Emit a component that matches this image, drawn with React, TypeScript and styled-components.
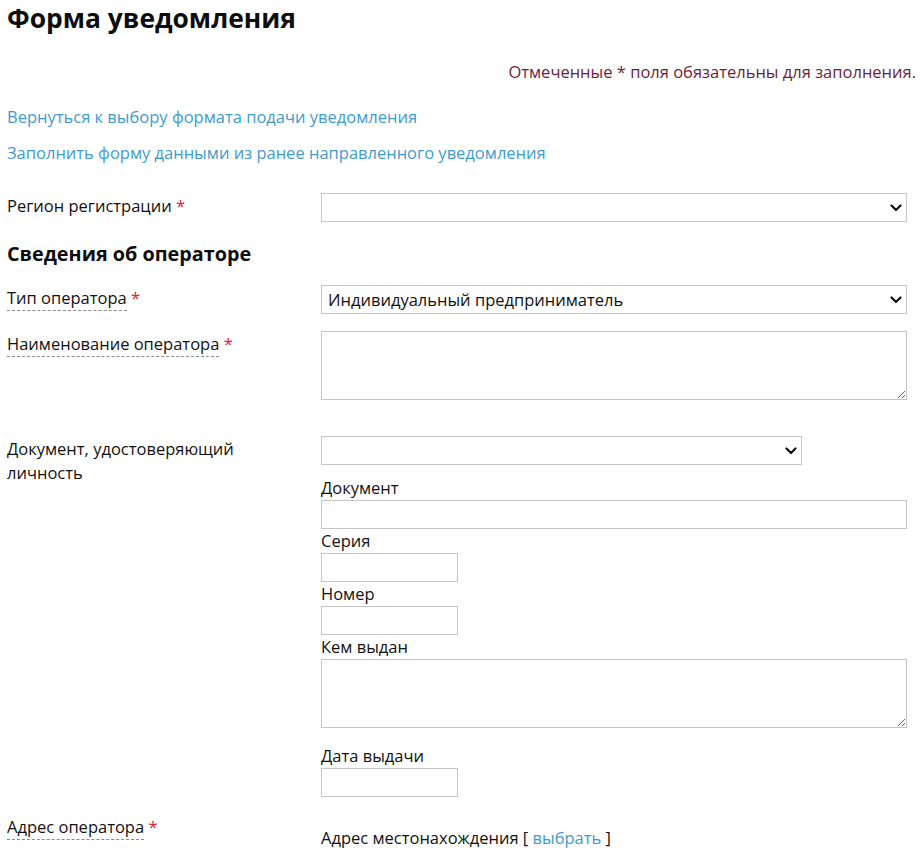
import React from 'react';
import styled, { createGlobalStyle } from 'styled-components';

const GlobalStyle = createGlobalStyle`
  body {
    margin: 0;
    background: #fff;
    color: #111;
    font-family: "Open Sans", "Liberation Sans", sans-serif;
    font-size: 16.5px;
  }
`;

const Dropdown = ({ width, value }: { width?: number; value?: string }) => (
  <SelectWrap $width={width}>
    <Select defaultValue={value ?? ''}>
      <option value={value ?? ''}>{value}</option>
    </Select>
    <Chevron viewBox="0 0 12 8" aria-hidden="true">
      <path d="M1.5 1.5 L6 6 L10.5 1.5" fill="none" stroke="#111" strokeWidth="2.2" strokeLinecap="round" strokeLinejoin="round" />
    </Chevron>
  </SelectWrap>
);

const App = () => {
  return (
    <Page>
      <GlobalStyle />
      <Title>Форма уведомления</Title>
      <Notice>Отмеченные * поля обязательны для заполнения.</Notice>
      <NavLink href="#" $top={21}>
        Вернуться к выбору формата подачи уведомления
      </NavLink>
      <NavLink href="#" $top={12}>
        Заполнить форму данными из ранее направленного уведомления
      </NavLink>

      <Row $top={28}>
        <Label>
          Регион регистрации <Req>*</Req>
        </Label>
        <Controls>
          <Dropdown />
        </Controls>
      </Row>

      <SectionTitle>Сведения об операторе</SectionTitle>

      <Row $top={17}>
        <Label>
          <Hint>Тип оператора</Hint> <Req>*</Req>
        </Label>
        <Controls>
          <Dropdown value="Индивидуальный предприниматель" />
        </Controls>
      </Row>

      <Row $top={17}>
        <Label>
          <Hint>Наименование оператора</Hint> <Req>*</Req>
        </Label>
        <Controls>
          <TextArea />
        </Controls>
      </Row>

      <Row $top={36}>
        <Label>Документ, удостоверяющий личность</Label>
        <Controls>
          <Dropdown width={481} />
          <FieldLabel $top={11}>Документ</FieldLabel>
          <Input />
          <FieldLabel>Серия</FieldLabel>
          <Input $width={137} />
          <FieldLabel>Номер</FieldLabel>
          <Input $width={137} />
          <FieldLabel>Кем выдан</FieldLabel>
          <TextArea />
          <FieldLabel $top={16}>Дата выдачи</FieldLabel>
          <Input $width={137} />
        </Controls>
      </Row>

      <Row $top={17}>
        <Label>
          <Hint>Адрес оператора</Hint> <Req>*</Req>
        </Label>
        <Controls>
          <AddressLine>
            Адрес местонахождения [ <InlineLink href="#">выбрать</InlineLink> ]
          </AddressLine>
        </Controls>
      </Row>
    </Page>
  );
};

const Page = styled.main`
  width: 909px;
  padding: 0 6px 0 7px;
`;

const Title = styled.h1`
  margin: 0;
  padding-top: 1px;
  font-size: 26.4px;
  line-height: 34px;
  font-weight: 700;
  color: #0d0d0d;
`;

const Notice = styled.p`
  margin: 25px 0 0;
  text-align: right;
  line-height: 24px;
  color: #6b1e3c;
`;

const NavLink = styled.a<{ $top: number }>`
  display: block;
  width: fit-content;
  margin-top: ${(p) => p.$top}px;
  line-height: 24px;
  color: #3f9bcb;
  text-decoration: none;
`;

const Row = styled.div<{ $top: number }>`
  display: grid;
  grid-template-columns: 314px 586px;
  margin-top: ${(p) => p.$top}px;
`;

const Label = styled.div`
  padding-top: 1px;
  padding-right: 40px;
  line-height: 24px;
  color: #111;
`;

const Hint = styled.span`
  border-bottom: 1px dashed #8a8a8a;
  padding-bottom: 1px;
`;

const Req = styled.span`
  color: #d8232a;
`;

const SectionTitle = styled.h2`
  margin: 18px 0 0;
  font-size: 19.8px;
  line-height: 28px;
  font-weight: 700;
  color: #0d0d0d;
`;

const Controls = styled.div`
  display: flex;
  flex-direction: column;
  align-items: flex-start;
`;

const SelectWrap = styled.div<{ $width?: number }>`
  position: relative;
  width: ${(p) => p.$width ?? 586}px;
  height: 29px;
`;

const Select = styled.select`
  appearance: none;
  display: block;
  width: 100%;
  height: 100%;
  box-sizing: border-box;
  border: 1px solid #c6c6c6;
  border-radius: 0;
  background: #fff;
  padding: 0 30px 0 6px;
  margin: 0;
  font-family: "Open Sans", "Liberation Sans", sans-serif;
  font-size: 16.5px;
  color: #111;
`;

const Chevron = styled.svg`
  position: absolute;
  right: 5px;
  top: 11px;
  width: 12px;
  height: 8px;
  pointer-events: none;
`;

const TextArea = styled.textarea`
  display: block;
  width: 586px;
  height: 69px;
  box-sizing: border-box;
  border: 1px solid #c6c6c6;
  border-radius: 0;
  font-family: "Open Sans", "Liberation Sans", sans-serif;
  font-size: 16.5px;
  margin: 0;
`;

const Input = styled.input<{ $width?: number }>`
  display: block;
  width: ${(p) => p.$width ?? 586}px;
  height: 29px;
  box-sizing: border-box;
  border: 1px solid #c6c6c6;
  border-radius: 0;
  padding: 0 4px;
  margin: 0;
  font-family: "Open Sans", "Liberation Sans", sans-serif;
  font-size: 16.5px;
`;

const FieldLabel = styled.label<{ $top?: number }>`
  display: block;
  margin-top: ${(p) => p.$top ?? 0}px;
  line-height: 24px;
  color: #111;
`;

const AddressLine = styled.div`
  margin-top: 12px;
  line-height: 24px;
  color: #111;
`;

const InlineLink = styled.a`
  color: #3f9bcb;
  text-decoration: none;
`;

export default App;
